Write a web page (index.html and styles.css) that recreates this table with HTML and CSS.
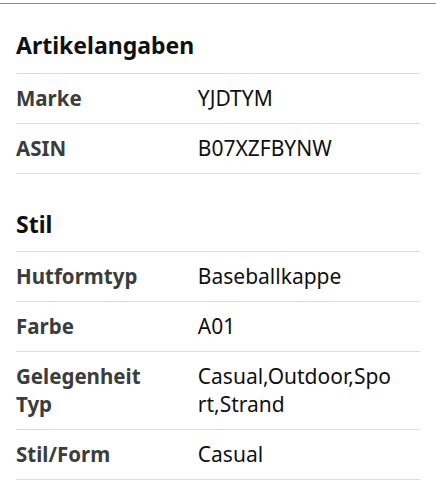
FILE: index.html
```html
<!DOCTYPE html>
<html lang="de">
<head>
<meta charset="utf-8">
<link rel="stylesheet" href="styles.css">
</head>
<body>
<div class="page">
  <section class="group">
    <h2 class="title">Artikelangaben</h2>
    <table class="specs">
      <tr><th>Marke</th><td>YJDTYM</td></tr>
      <tr><th>ASIN</th><td>B07XZFBYNW</td></tr>
    </table>
  </section>
  <section class="group">
    <h2 class="title">Stil</h2>
    <table class="specs">
      <tr><th>Hutformtyp</th><td>Baseballkappe</td></tr>
      <tr><th>Farbe</th><td>A01</td></tr>
      <tr><th>Gelegenheit Typ</th><td>Casual,Outdoor,Sport,Strand</td></tr>
      <tr><th>Stil/Form</th><td>Casual</td></tr>
    </table>
  </section>
</div>
</body>
</html>
```

FILE: styles.css
```css
html, body {
  margin: 0;
  padding: 0;
  background: #fff;
}
body {
  font-family: "Noto Sans", "Open Sans", sans-serif;
  color: #0f1111;
}
.page {
  margin-top: 3px;
  border-top: 1px solid #8a8a8a;
  padding: 0 16px;
}
.title {
  margin: 0;
  font-size: 23px;
  font-weight: 700;
  line-height: 28px;
  padding: 27px 0 14px;
  border-bottom: 1px solid #dcdcdc;
}
.group + .group .title {
  padding-top: 36px;
  padding-bottom: 13px;
}
.specs {
  width: 100%;
  border-collapse: collapse;
  table-layout: fixed;
}
.specs th, .specs td {
  box-sizing: border-box;
  padding: 10px 0 11px;
  font-size: 21px;
  line-height: 28px;
  text-align: left;
  vertical-align: top;
  border-bottom: 1px solid #dcdcdc;
}
.specs th {
  width: 45%;
  font-weight: 700;
  color: #3b3d3d;
  font-size: 20.5px;
  padding-right: 30px;
}
.specs td {
  word-break: break-all;
  padding-right: 24px;
}
```
